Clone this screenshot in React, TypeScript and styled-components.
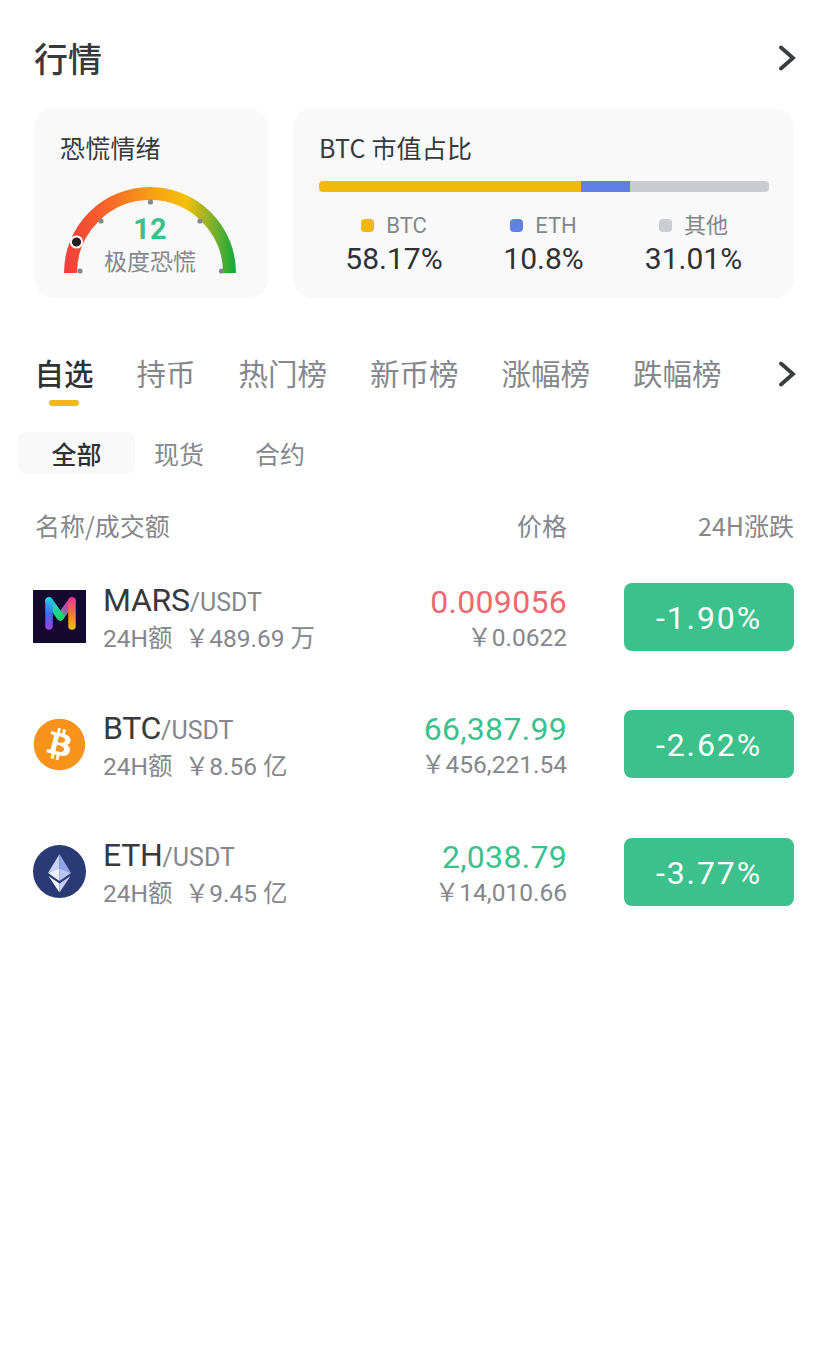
import React from "react";
import styled, { createGlobalStyle } from "styled-components";
import { FaBitcoin } from "react-icons/fa";

const CJK = `"Noto Sans CJK SC", "Noto Sans", sans-serif`;
const NUM = `Roboto, "Noto Sans CJK SC", sans-serif`;

const GlobalStyle = createGlobalStyle`
  html, body { margin: 0; padding: 0; background: #fff; }
  body { font-family: ${CJK}; color: #333; }
`;

const Page = styled.div`
  width: 828px;
  height: 1356px;
  overflow: hidden;
  padding-top: 35px;
  box-sizing: border-box;
`;

const Header = styled.header`
  display: flex;
  align-items: center;
  justify-content: space-between;
  height: 46px;
  padding: 0 32px 0 34px;
`;

const Title = styled.h1`
  margin: 0;
  font-size: 34px;
  line-height: 46px;
  font-weight: 500;
  color: #37393d;
`;

const Arrow = () => (
  <svg width="18" height="26" viewBox="0 0 18 26" fill="none">
    <path d="M3 2.5 L15 13 L3 23.5" stroke="#3a3c40" strokeWidth="3.8" strokeLinecap="round" strokeLinejoin="miter" />
  </svg>
);

const Cards = styled.section`
  display: flex;
  gap: 25px;
  margin: 27px 34px 0;
`;

const Card = styled.div<{ $wide?: boolean }>`
  box-sizing: border-box;
  height: 190px;
  width: ${(p) => (p.$wide ? "501px" : "234px")};
  background: #f9f9fa;
  border-radius: 20px;
  padding: 22px 26px 0;
`;

const CardTitle = styled.div`
  font-size: 25px;
  line-height: 34px;
  letter-spacing: 0.2px;
  color: #37393d;
  font-weight: 400;
`;

const GaugeWrap = styled.div`
  position: relative;
  width: 174px;
  height: 90px;
  margin: 22px 0 0 3px;
`;

const GaugeValue = styled.div`
  position: absolute;
  top: 26px;
  left: 0;
  right: 0;
  text-align: center;
  font-family: ${NUM};
  font-size: 29px;
  line-height: 34px;
  font-weight: 700;
  color: #3cc08c;
`;

const GaugeLabel = styled.div`
  position: absolute;
  top: 58px;
  left: 0;
  right: 0;
  text-align: center;
  font-size: 23px;
  line-height: 32px;
  color: #85878c;
`;

const Gauge = () => (
  <GaugeWrap>
    <svg width="174" height="90" viewBox="0 0 174 90" fill="none">
      <defs>
        <linearGradient id="gaugeStroke" x1="1" x2="173" y1="0" y2="0" gradientUnits="userSpaceOnUse">
          <stop offset="0" stopColor="#f23c3c" />
          <stop offset="0.2" stopColor="#f65d2c" />
          <stop offset="0.5" stopColor="#f89c16" />
          <stop offset="0.71" stopColor="#f5c00a" />
          <stop offset="0.86" stopColor="#85b02c" />
          <stop offset="1" stopColor="#0cab3c" />
        </linearGradient>
      </defs>
      <path d="M7.5 87 A79.5 79.5 0 0 1 166.5 87" stroke="url(#gaugeStroke)" strokeWidth="13" />
      <circle cx="17" cy="85" r="2.6" fill="#85878c" />
      <circle cx="38" cy="35" r="2.6" fill="#85878c" />
      <circle cx="87.5" cy="16" r="2.6" fill="#85878c" />
      <circle cx="137" cy="35" r="2.6" fill="#85878c" />
      <circle cx="158.5" cy="85" r="2.6" fill="#85878c" />
      <circle cx="13.5" cy="56" r="5.6" fill="#222" stroke="#fff" strokeWidth="2" />
    </svg>
    <GaugeValue>12</GaugeValue>
    <GaugeLabel>极度恐慌</GaugeLabel>
  </GaugeWrap>
);

const ShareBar = styled.div`
  display: flex;
  height: 11px;
  width: 450px;
  margin-top: 17px;
  border-radius: 4px;
  overflow: hidden;
`;

const ShareSegment = styled.div<{ $color: string; $width: number }>`
  width: ${(p) => p.$width}px;
  background: ${(p) => p.$color};
`;

const Legend = styled.div`
  display: flex;
  margin-top: 18px;
  width: 450px;
`;

const LegendItem = styled.div<{ $width: number }>`
  width: ${(p) => p.$width}px;
  text-align: center;
`;

const LegendLabel = styled.div`
  display: flex;
  align-items: center;
  justify-content: center;
  gap: 12px;
  height: 31px;
  font-family: ${NUM};
  font-size: 22px;
  line-height: 31px;
  color: #85878c;
`;

const LegendDot = styled.span<{ $color: string }>`
  width: 13px;
  height: 13px;
  border-radius: 4px;
  background: ${(p) => p.$color};
`;

const LegendValue = styled.div`
  font-family: ${NUM};
  font-size: 30px;
  line-height: 36px;
  color: #2f3135;
`;

const Tabs = styled.nav`
  display: flex;
  align-items: center;
  gap: 43px;
  margin-top: 51px;
  padding: 0 32px 0 34.5px;
  height: 46px;
`;

const Tab = styled.div<{ $active?: boolean }>`
  position: relative;
  font-size: 29.5px;
  line-height: 46px;
  white-space: nowrap;
  color: ${(p) => (p.$active ? "#2f3135" : "#85878c")};
  font-weight: ${(p) => (p.$active ? 500 : 400)};
  ${(p) =>
    p.$active &&
    `&::after {
      content: "";
      position: absolute;
      left: 14.5px;
      bottom: -11px;
      width: 30px;
      height: 6px;
      border-radius: 3px;
      background: #efb916;
    }`}
`;

const TabArrow = styled.div`
  margin: 4px 0 0 auto;
  display: flex;
`;

const SubTabs = styled.div`
  display: flex;
  align-items: center;
  margin: 37px 0 0 18px;
  height: 42px;
`;

const SubTab = styled.div<{ $active?: boolean }>`
  font-size: 25px;
  line-height: 42px;
  border-radius: 8px;
  box-sizing: border-box;
  text-align: center;
  width: ${(p) => (p.$active ? "117px" : "auto")};
  margin-left: ${(p) => (p.$active ? "0" : "19px")};
  margin-right: ${(p) => (p.$active ? "0" : "32px")};
  color: ${(p) => (p.$active ? "#2f3135" : "#85878c")};
  font-weight: ${(p) => (p.$active ? 500 : 400)};
  background: ${(p) => (p.$active ? "#f9f9fa" : "transparent")};
`;

const Columns = styled.div`
  display: grid;
  grid-template-columns: 1fr 170px;
  column-gap: 57px;
`;

const ColumnHead = styled(Columns)`
  height: 34px;
  align-items: center;
  margin: 34px 34px 0 35px;
  font-size: 25px;
  line-height: 34px;
  color: #85878c;
`;

const HeadLeft = styled.div`
  display: flex;
  justify-content: space-between;
`;

const HeadRight = styled.div`
  text-align: right;
  white-space: nowrap;
  font-size: 25px;
  line-height: 30px;
`;

const List = styled.div`
  margin: 34px 34px 0 33px;
`;

const Row = styled(Columns)`
  height: 68px;
  margin-bottom: 59.5px;
  align-items: center;
`;

const RowLeft = styled.div`
  display: flex;
  align-items: center;
  justify-content: space-between;
`;

const Pair = styled.div`
  display: flex;
  align-items: center;
  gap: 17px;
`;

const CoinIcon = styled.div`
  width: 53px;
  height: 53px;
  flex: none;
  display: flex;
`;

const BtcIcon = styled(CoinIcon)`
  background: radial-gradient(circle, #fff 0 60%, transparent 62%);
  border-radius: 50%;
`;

const PairText = styled.div`
  font-family: ${NUM};
  padding-top: 6px;
`;

const PairName = styled.div`
  font-size: 32px;
  line-height: 36px;
  letter-spacing: -0.3px;
  color: #37393d;
  white-space: nowrap;
  span {
    font-size: 25px;
    letter-spacing: 0;
    color: #85878c;
  }
`;

const Sub = styled.div`
  font-size: 24.5px;
  line-height: 36px;
  color: #85878c;
  white-space: nowrap;
  font-family: ${NUM};
`;

const PriceBox = styled.div`
  text-align: right;
  font-family: ${NUM};
  padding-top: 6px;
`;

const Price = styled.div<{ $up?: boolean }>`
  font-size: 32px;
  line-height: 36px;
  letter-spacing: 0.3px;
  font-weight: 400;
  color: ${(p) => (p.$up ? "#ea6a70" : "#3cc08c")};
`;

const Change = styled.div`
  height: 68px;
  border-radius: 8px;
  background: #3cc08c;
  color: #fff;
  font-family: ${NUM};
  font-size: 32px;
  letter-spacing: 1.9px;
  line-height: 70px;
  text-align: center;
`;

const MarsLogo = () => (
  <svg width="53" height="53" viewBox="0 0 53 53" fill="none">
    <defs>
      <linearGradient id="marsLeft" x1="0" x2="0" y1="8" y2="40" gradientUnits="userSpaceOnUse">
        <stop offset="0" stopColor="#25d0e0" />
        <stop offset="0.5" stopColor="#3a6bf0" />
        <stop offset="1" stopColor="#a63ee6" />
      </linearGradient>
      <linearGradient id="marsRight" x1="0" x2="0" y1="8" y2="40" gradientUnits="userSpaceOnUse">
        <stop offset="0" stopColor="#f0359a" />
        <stop offset="0.55" stopColor="#f5802a" />
        <stop offset="1" stopColor="#fbc414" />
      </linearGradient>
      <linearGradient id="marsDownLeft" x1="16" x2="27" y1="11" y2="27" gradientUnits="userSpaceOnUse">
        <stop offset="0" stopColor="#25c8e8" />
        <stop offset="1" stopColor="#18d868" />
      </linearGradient>
      <linearGradient id="marsDownRight" x1="39" x2="27" y1="11" y2="27" gradientUnits="userSpaceOnUse">
        <stop offset="0" stopColor="#f0359a" />
        <stop offset="0.6" stopColor="#a058b0" />
        <stop offset="1" stopColor="#18d868" />
      </linearGradient>
    </defs>
    <rect width="53" height="53" fill="#15092f" />
    <path d="M39 11 L27.3 26.7" stroke="url(#marsDownRight)" strokeWidth="7.5" strokeLinecap="round" />
    <path d="M16 11 L27.3 26.7" stroke="url(#marsDownLeft)" strokeWidth="7.5" strokeLinecap="round" />
    <path d="M16 11 V36" stroke="url(#marsLeft)" strokeWidth="7.5" strokeLinecap="round" />
    <path d="M39 11 V36" stroke="url(#marsRight)" strokeWidth="7.5" strokeLinecap="round" />
  </svg>
);

const EthLogo = () => (
  <svg width="53" height="53" viewBox="0 0 53 53">
    <circle cx="26.5" cy="26.5" r="26.5" fill="#2a3a75" />
    <polygon points="26.5,9 15,28 26.5,23" fill="#c8d3f5" />
    <polygon points="26.5,9 38,28 26.5,23" fill="#8fa5e5" />
    <polygon points="15,28 26.5,36 26.5,23" fill="#eef2fd" />
    <polygon points="38,28 26.5,36 26.5,23" fill="#b8c6f2" />
    <polygon points="15.5,31 26.5,47.5 26.5,38.5" fill="#f4f6fe" />
    <polygon points="37.5,31 26.5,47.5 26.5,38.5" fill="#c4d0f3" />
  </svg>
);

const coins = [
  { name: "MARS", volume: "￥489.69 万", price: "0.009056", cny: "￥0.0622", change: "-1.90%", up: true, icon: <CoinIcon><MarsLogo /></CoinIcon> },
  { name: "BTC", volume: "￥8.56 亿", price: "66,387.99", cny: "￥456,221.54", change: "-2.62%", icon: <BtcIcon><FaBitcoin size={53} color="#f7931a" /></BtcIcon> },
  { name: "ETH", volume: "￥9.45 亿", price: "2,038.79", cny: "￥14,010.66", change: "-3.77%", icon: <CoinIcon><EthLogo /></CoinIcon> },
];

const shares = [
  { label: "BTC", value: "58.17%", color: "#f0b90b", bar: 262, col: 150 },
  { label: "ETH", value: "10.8%", color: "#6080e8", bar: 49, col: 149 },
  { label: "其他", value: "31.01%", color: "#cbccd2", bar: 139, col: 151 },
];

export default function App() {
  return (
    <Page>
      <GlobalStyle />
      <Header>
        <Title>行情</Title>
        <Arrow />
      </Header>
      <Cards>
        <Card>
          <CardTitle>恐慌情绪</CardTitle>
          <Gauge />
        </Card>
        <Card $wide>
          <CardTitle>BTC 市值占比</CardTitle>
          <ShareBar>
            {shares.map((s) => (
              <ShareSegment key={s.label} $color={s.color} $width={s.bar} />
            ))}
          </ShareBar>
          <Legend>
            {shares.map((s) => (
              <LegendItem key={s.label} $width={s.col}>
                <LegendLabel>
                  <LegendDot $color={s.color} />
                  {s.label}
                </LegendLabel>
                <LegendValue>{s.value}</LegendValue>
              </LegendItem>
            ))}
          </Legend>
        </Card>
      </Cards>
      <Tabs>
        <Tab $active>自选</Tab>
        <Tab>持币</Tab>
        <Tab>热门榜</Tab>
        <Tab>新币榜</Tab>
        <Tab>涨幅榜</Tab>
        <Tab>跌幅榜</Tab>
        <TabArrow>
          <Arrow />
        </TabArrow>
      </Tabs>
      <SubTabs>
        <SubTab $active>全部</SubTab>
        <SubTab>现货</SubTab>
        <SubTab>合约</SubTab>
      </SubTabs>
      <ColumnHead>
        <HeadLeft>
          <span>名称/成交额</span>
          <span>价格</span>
        </HeadLeft>
        <HeadRight>24H涨跌</HeadRight>
      </ColumnHead>
      <List>
        {coins.map((c) => (
          <Row key={c.name}>
            <RowLeft>
              <Pair>
                {c.icon}
                <PairText>
                  <PairName>
                    {c.name}
                    <span>/USDT</span>
                  </PairName>
                  <Sub>24H额&nbsp;&nbsp;{c.volume}</Sub>
                </PairText>
              </Pair>
              <PriceBox>
                <Price $up={c.up}>{c.price}</Price>
                <Sub>{c.cny}</Sub>
              </PriceBox>
            </RowLeft>
            <Change>{c.change}</Change>
          </Row>
        ))}
      </List>
    </Page>
  );
}
